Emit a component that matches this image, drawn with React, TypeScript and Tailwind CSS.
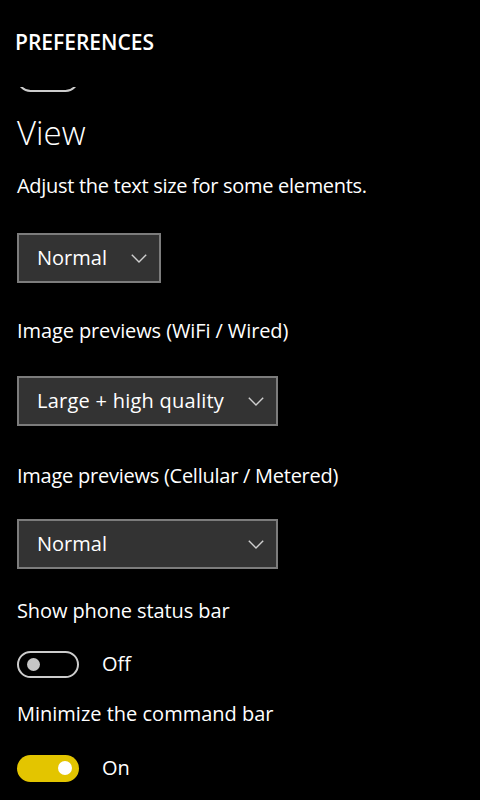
import React from "react";

const font = { fontFamily: '"Open Sans", "Noto Sans", sans-serif' };

function Chevron() {
  return (
    <svg width="16" height="9" viewBox="0 0 16 9" className="shrink-0">
      <path d="M0.8 0.8 L8 8 L15.2 0.8" fill="none" stroke="#cfcfcf" strokeWidth="1.4" />
    </svg>
  );
}

function Dropdown({ label, w, mt, ls }: { label: string; w: string; mt: string; ls: string }) {
  return (
    <div
      className={`${w} ${mt} h-[50px] border-2 border-[#7c7c7c] bg-[#333333] flex items-center justify-between pl-[18px] pr-[12px]`}
    >
      <span className={`text-[20px] leading-[28px] text-white ${ls}`}>{label}</span>
      <Chevron />
    </div>
  );
}

function Toggle({ on }: { on: boolean }) {
  if (on) {
    return (
      <div className="w-[62px] h-[27px] rounded-full bg-[#e3c500] flex items-center justify-end pr-[7px]">
        <div className="w-[14px] h-[14px] rounded-full bg-white" />
      </div>
    );
  }
  return (
    <div className="w-[62px] h-[27px] rounded-full border-2 border-[#cccccc] flex items-center pl-[8px]">
      <div className="w-[13px] h-[13px] rounded-full bg-[#c6c6c6]" />
    </div>
  );
}

export default function App() {
  return (
    <div className="w-[480px] h-[800px] bg-black text-white overflow-hidden flex flex-col" style={font}>
      <div className="h-[87px] shrink-0 pl-[15px] pt-[28px]">
        <div className="text-[21px] leading-[28px] font-semibold">PREFERENCES</div>
      </div>
      <div className="flex-1 overflow-hidden pl-[17px] flex flex-col items-start">
        <div className="-mt-[22px]">
          <Toggle on={false} />
        </div>
        <div className="mt-[21px] text-[33px] leading-[40px] font-light">View</div>
        <div className="mt-[19px] text-[20px] leading-[28px] tracking-[-0.3px]">
          Adjust the text size for some elements.
        </div>
        <Dropdown label="Normal" w="w-[144px]" mt="mt-[33px]" ls="" />
        <div className="mt-[34px] text-[20px] leading-[28px] tracking-[-0.1px]">Image previews (WiFi / Wired)</div>
        <Dropdown label="Large + high quality" w="w-[261px]" mt="mt-[31px]" ls="tracking-[0.25px]" />
        <div className="mt-[36px] text-[20px] leading-[28px] tracking-[-0.25px]">
          Image previews (Cellular / Metered)
        </div>
        <Dropdown label="Normal" w="w-[261px]" mt="mt-[29px]" ls="" />
        <div className="mt-[28px] text-[20px] leading-[28px] tracking-[-0.1px]">Show phone status bar</div>
        <div className="mt-[25px] flex items-center gap-[23px]">
          <Toggle on={false} />
          <span className="text-[20px] leading-[28px]">Off</span>
        </div>
        <div className="mt-[22px] text-[20px] leading-[28px]">Minimize the command bar</div>
        <div className="mt-[26px] flex items-center gap-[23px]">
          <Toggle on={true} />
          <span className="text-[20px] leading-[28px]">On</span>
        </div>
      </div>
    </div>
  );
}
